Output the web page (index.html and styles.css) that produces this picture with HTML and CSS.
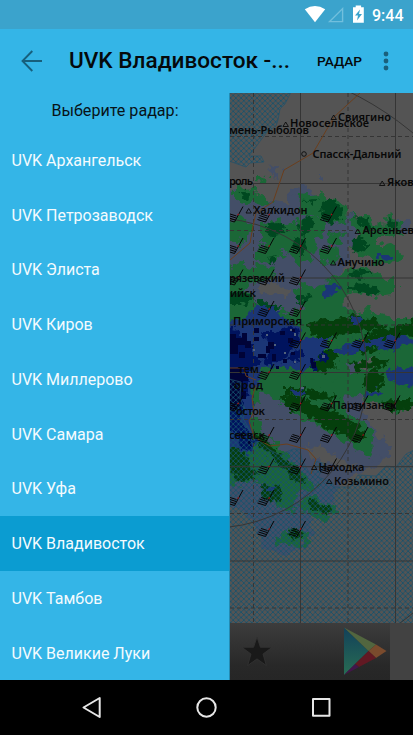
FILE: index.html
```html
<!DOCTYPE html>
<html lang="ru">
<head>
<meta charset="utf-8">
<title>UVK Владивосток</title>
<link rel="stylesheet" href="styles.css">
</head>
<body>
<div class="screen">
  <header class="status">
    <svg class="status-icons" viewBox="300 0 70 29">
      <path fill="#fff" d="M304.800 9.200Q315 2.800 325.200 9.200L315 22.200Z"/>
      <path fill="none" stroke="#71bfdd" stroke-width="1.400" d="M342.600 8.600V21.600H329.600Z"/>
      <path fill="#fff" d="M353 7.200h2.700V5.600h5.400v1.600h2.700v15.600H353z"/>
      <path fill="#3ba3cc" d="M360 9.500l-5 6h3l-1 5 5-6.500h-3z"/>
    </svg>
    <span class="time">9:44</span>
  </header>
  <div class="appbar">
    <svg class="back" viewBox="0 0 22 22"><path fill="none" stroke="#175f7c" stroke-width="1.900" d="M21 11H2M11.300 1L1.500 11l9.800 10"/></svg>
    <h1>UVK Владивосток -...</h1>
    <span class="action">РАДАР</span>
    <svg class="more" viewBox="0 0 6 20"><g fill="#1a607c"><circle cx="3" cy="3" r="2.400"/><circle cx="3" cy="10" r="2.400"/><circle cx="3" cy="17" r="2.400"/></g></svg>
  </div>
  <main class="content">
    <nav class="drawer">
      <h2>Выберите радар:</h2>
      <ul>
        <li>UVK Архангельск</li>
        <li>UVK Петрозаводск</li>
        <li>UVK Элиста</li>
        <li>UVK Киров</li>
        <li>UVK Миллерово</li>
        <li>UVK Самара</li>
        <li>UVK Уфа</li>
        <li class="selected">UVK Владивосток</li>
        <li>UVK Тамбов</li>
        <li>UVK Великие Луки</li>
      </ul>
    </nav>
    <section class="radar">
      <svg class="map" viewBox="230 93 183 530">
        <defs>
          <pattern id="hatch" width="5.300" height="5.300" patternUnits="userSpaceOnUse"><path d="M0 0L5.300 5.300M5.300 0L0 5.300" stroke="#14526e" stroke-width=".8"/></pattern>
          <filter id="rough" color-interpolation-filters="sRGB" x="-20%" y="-20%" width="140%" height="140%"><feTurbulence type="fractalNoise" baseFrequency=".11" numOctaves="3" seed="8"/><feDisplacementMap in="SourceGraphic" scale="17" xChannelSelector="R" yChannelSelector="G"/></filter>
          <filter id="fine" color-interpolation-filters="sRGB" x="-20%" y="-20%" width="140%" height="140%"><feTurbulence type="fractalNoise" baseFrequency=".18" numOctaves="2" seed="3"/><feDisplacementMap in="SourceGraphic" scale="12" xChannelSelector="R" yChannelSelector="G"/></filter>
          <g id="barb" fill="none" stroke="#050505" stroke-width="1"><path d="M5-8L-3.500 7.500M-1.500 1.500L-8-.5M-2 3.500L-9.500 1M-2.700 5.500L-10.500 3M-3.500 7.500L-11.500 5"/><path stroke="#a01818" stroke-width="1.300" d="M-.4.700L.6-.7"/></g>
        </defs>
        <rect x="230" y="93" width="183" height="530" fill="#545454"/>
        <g filter="url(#rough)" fill="#434e67">
          <path d="M215 192L240 188 262 200 284 204 290 190 306 184 318 200 336 200 348 214 360 222 356 240 348 262 336 278 340 300 360 320 360 400 376 430 392 450 376 466 352 476 336 490 330 504 312 516 310 544 284 556 262 548 254 520 236 508 215 494Z"/>
          <path d="M268 168l10-1 2 8-9 2zM318 176l8-1v5h-8zM292 188l20-2-4 10-14 4zM384 220l24 0 4 10-20 2zM350 446l28-4 12 12-20 8z"/>
        </g>
        <g filter="url(#rough)" fill="#545454"><path d="M256 288l20-4 18 6-8 6-24-2zM284 376l16 2 10 8-20 2zM376 412l50-8v40l-40 0-14-16zM300 442l26 8 30 16-16 4-30-16z"/></g>
        <g filter="url(#rough)" fill="#1b6737">
          <path d="M236 188L252 189 262 194 274 204 266 208 252 202 246 206 236 202ZM257 176l12 1-1 6-11-1zM300 196l16-3 10 8 10-3 12 9-1 12-8 7-14-3-8-7-10 0-8-6zM262 223l20-4 14 6 6-8 18 0 4 10-8 16-6 18-12 4-8-12-14-4-14-8zM332 233l12 2-6 10-10-6zM350 216l14 0 10 8 12 1 10 4-6 8-12 0 0 8 10 6 4 10-16 4-12-8-10-8 6-12-6-10zM384 218l8-3 8 8 6 10-14-1zM376 246l14-4 12 10-10 12-12-4zM222 222l18-4 14 6-6 16-12 2-14-4zM256 246l18-2 10 10-14 8-14-2zM320 250l12-2 8 8-8 10-12-6z"/>
          <path d="M222 268l22-5 16 2 18 2-10 14-18 2-8 10-20-1zM215 300L248 292 262 306 276 306 292 316 306 306 296 298 298 286 316 284 334 280 344 270 360 266 380 276 396 278 396 294 370 296 350 292 340 302 352 312 366 310 392 318 430 318V352L396 356 372 360 358 362 340 366 350 374 368 366 384 354 430 350V398L396 412 376 406 356 396 340 394 346 410 366 426 374 440 370 456 354 446 330 432 308 422 286 404 262 394 250 412 268 438 288 456 304 474 316 484 312 492 298 490 294 514 282 508 270 490 252 480 240 484 215 478Z"/>
          <path d="M304 498l14 0 8 6 10 2-2 10-14 6-12-10-8-8zM274 537l18-6 14 2 6 10-14 4-20-4z"/>
        </g>
        <g filter="url(#rough)" fill="#1b6737"><path d="M230 345H340L348 380 300 378 292 372 262 376 250 390H230z"/></g>
        <g filter="url(#fine)" fill="#004820">
          <path d="M322 203l10-4 9 7-1 12-11 6-8-8zM304 200l14-1-6 5zM242 190l9 2-4 8-6-1zM266 224l16-1 6 9-16 5-6-5zM306 216l8 4-1 10-9 6-6-8zM292 240l8-2 8 8-5 10-9-6zM353 216l12 2 8 8-7 4zM352 240l8-4 9 10-9 8-9-4zM388 218l10 6-2 8-7-4zM268 258l10-2-8 8zM350 272l16-5 6 7-16 5zM348 284l22 1 12 6-12 4-22-5zM300 296l12-2-6 8-12 3zM228 291l18 0 8 9-12 5-14 0zM256 296l12 8 14 3-10 5-16-7z"/>
        </g>
        <g filter="url(#fine)" fill="#053f0c">
          <path d="M307 323l20-3 14-2 14-3 20 5 12 8-20 4-26 3-20 5-12-9zM372 332l30-7 16-5v16l-24 2-16 12-18 4-10-8zM300 352l14-2 18 0 8 8-24 10-20-4zM280 396l18 0 18 9 26 10 18 12 8 10-12 6-18-10-20-8-14-12-18-6zM284 388l20 0 20 4 14 6-20 2-20-5-14 1zM366 374l12-6 8 12-12 12-12-6zM380 401l16-1 16 0 2 8-22 4zM246 427l20 12 14 15 22 18 5 12-12-4-18-18-22-20zM228 444l14 4 10 22-14 2-10-4zM228 468l20-4 12 10-20 9zM309 498l6 0 6 8 12 0-6 10-18-8zM262 485l17 2 4 10-10 6-12-8zM288 530l10-1 5 7-11 5zM350 362l24-2 16-2-4 8-30 6zM310 360l18-2 8 9-18 6z"/>
        </g>
        <g filter="url(#fine)" fill="#1b3676">
          <path d="M222 322L246 318 250 310 266 305 276 311 290 322 300 326 302 338 330 338 324 352 316 362 298 372 282 366 262 368 258 382 250 390 254 404 250 422 256 446 248 456 236 446 222 446Z"/>
          <path d="M323 290l8-6 9 3-5 8-12 2zM351 318l12-1-3 7-9-1zM334 350l18-9 20-1 20-4 16 1 4 5-18 8-24-2-20 6-16 0zM376 255l14 0-2 5-12-2zM386 372l10-4 16-1 4 9-4 12-16-4-10-8zM362 394l16-4 6 4-14 4zM292 392l12-3 2 5-11 2zM268 488l6-2v7h-6z"/>
        </g>
        <g filter="url(#fine)" fill="#00135e">
          <path d="M222 325L238 328 244 338 252 344 252 356 262 362 248 372 248 392 240 400 246 410 240 420 254 440 252 452 240 448 236 432 222 428Z"/>
          <path d="M262 332l12 0 14-6 10 4 2 12-8 8-10 10-12 8-6-8 8-12zM310 360l5 0 2 9-5 2zM298 348l8 8-8 6-10-3zM322 352l6 0-2 12-5-2z"/>
        </g>
        <g fill="#000337"><path d="M230 334h6v4h6v-5h5v8h4v7h-6v-3h-7v9h-8zM254 328h5v5h-5zM254 337h5v4h-5zM268 342h6v7h-4v4h-4v-7h2zM280 331h5v4h-5zM288 338h5v5h-5zM258 354h8v4h-8zM272 354h4v7h-4zM239 352h6v6h-6zM230 368h12v6h6v7h-5v10h3v8h-5v11h-11zM239 432h5v6h-5zM248 441h3v5h-3zM292 329h3v3h-3zM291 352h4v3h-4zM283 359h4v4h-4zM276 366h3v3h-3zM310 358h3v4h3v6h-4z"/></g>
        <g fill="#51617b"><path d="M274 344h2v2h-2zM294 333h2v3h-2zM322 355h3v3h-3zM284 352h2v2h-2zM266 334h2v2h-2zM253 349h2v2h-2zM294 361h2v2h-2zM290 329h2v2h-2zM301 387h3v2h-3z"/></g>
        <g fill="url(#hatch)" stroke="#225069" stroke-width=".7">
          <path d="M229 92H291L285 104 280 109 278 120 276 126 267 132 249 156H261L264 162 250 163 246 167 229 161Z"/>
          <path d="M229 379L241 382 240 398 246 411 243 418 253 436 270 450 280 455 293 449 300 449 302 460 310 474 315 461 326 464 318 477 332 482 334 487H350L358 475 376 476 386 466 396 467 406 454 414 450V624H229Z"/>
        </g>
        <g fill="none" stroke="#353535" stroke-width="1">
          <path d="M300.500 93V623M395.500 93V623M230 183.500H413M230 278H413M230 372.500H413M230 466.700H413M230 561H413"/>
          <path stroke-dasharray="4 3" d="M253.500 93V623M348 93V623M230 136.500H413M230 230.500H413M230 325H413M230 419.500H413M230 513.500H413M230 608H413"/>
          <circle cx="212" cy="373" r="155"/><circle cx="212" cy="373" r="313"/>
        </g>
        <path fill="none" stroke="#6b3e1c" stroke-width="1" d="M360 93L334 117 313 153 284 170 273 202 256 213 253 226 250 243 230 260M230 368L244 368 246 376 256 380M256 385L252 398 254 412 249 421 254 437 270 446 287 444 308 450 316 459 311 474"/>
        <g>
          <use href="#barb" x="238" y="214.500"/><use href="#barb" x="269" y="214.500"/><use href="#barb" x="331.500" y="214.500"/>
          <use href="#barb" x="238" y="246"/><use href="#barb" x="269" y="246"/><use href="#barb" x="300.500" y="246"/><use href="#barb" x="331.500" y="246"/>
          <use href="#barb" x="238" y="277.500"/><use href="#barb" x="269" y="277.500"/><use href="#barb" x="300.500" y="277.500"/>
          <use href="#barb" x="269" y="309"/><use href="#barb" x="300.500" y="309"/>
          <use href="#barb" x="300.500" y="340.500"/><use href="#barb" x="331.500" y="340.500"/><use href="#barb" x="363" y="340.500"/><use href="#barb" x="395" y="340.500"/>
          <use href="#barb" x="269" y="372"/><use href="#barb" x="300.500" y="372"/>
          <use href="#barb" x="238" y="403.500"/><use href="#barb" x="300.500" y="403.500"/><use href="#barb" x="331.500" y="403.500"/><use href="#barb" x="363" y="403.500"/><use href="#barb" x="395" y="403.500"/>
          <use href="#barb" x="269" y="435"/><use href="#barb" x="300.500" y="435"/><use href="#barb" x="331.500" y="435"/><use href="#barb" x="363" y="435"/>
          <use href="#barb" x="269" y="466.500"/><use href="#barb" x="300.500" y="466.500"/><use href="#barb" x="331.500" y="466.500"/>
          <use href="#barb" x="238" y="498"/><use href="#barb" x="269" y="498"/><use href="#barb" x="269" y="529"/><use href="#barb" x="300.500" y="529"/>
        </g>
        <g fill="none" stroke="#0b0b0b" stroke-width=".9">
          <path d="M331 119.500l2.700-4.500 2.700 4.500zM283 126.500l2.700-4.500 2.700 4.500zM379.500 185.500l2.700-4.500 2.700 4.500zM246 213l2.700-4.500 2.700 4.500zM355 233.500l2.700-4.500 2.700 4.500zM330.500 265l2.700-4.500 2.700 4.500zM311.500 469.500l2.700-4.500 2.700 4.500zM326.500 483.500l2.700-4.500 2.700 4.500zM327 408l2.700-4.500 2.700 4.500z"/>
          <circle cx="304" cy="154" r="2.300"/>
        </g>
        <g class="places">
          <text x="338" y="120.500" textLength="53">Свиягино</text>
          <text x="290" y="126.500" textLength="79">Новосельское</text>
          <text x="229" y="133.500" textLength="80">мень-Рыболов</text>
          <text x="312.500" y="158" textLength="89">Спасск-Дальний</text>
          <text x="229" y="185" textLength="24">роль</text>
          <text x="387" y="186">Яков</text>
          <text x="362.500" y="233.500" textLength="51.500">Арсеньев</text>
          <text x="253.500" y="214" textLength="54">Халкидон</text>
          <text x="337.500" y="265.500" textLength="47">Анучино</text>
          <text x="229" y="281.500" textLength="56">рязевский</text>
          <text x="230" y="296.500" textLength="26">ийск</text>
          <text x="233" y="325" textLength="69">Приморская</text>
          <text x="238" y="372.500" textLength="21">тем</text>
          <text x="234" y="389" textLength="29">ород</text>
          <text x="236" y="414.500" textLength="29">осток</text>
          <text x="229" y="439" textLength="36">сеевск</text>
          <text x="332.500" y="409" textLength="64">Партизанск</text>
          <text x="318.500" y="470.500" textLength="46">Находка</text>
          <text x="334" y="484.500" textLength="55">Козьмино</text>
        </g>
      </svg>
      <footer class="ad">
        <svg viewBox="230 623 183 57">
          <defs>
            <linearGradient id="bar" x2="0" y2="1"><stop stop-color="#3c3c3c"/><stop offset=".75" stop-color="#282828"/><stop offset="1" stop-color="#262626"/></linearGradient>
            <linearGradient id="teal" x2="0" y2="1"><stop stop-color="#12415a"/><stop offset="1" stop-color="#286c53"/></linearGradient>
          </defs>
          <path fill="#424242" d="M230 623h183v57H230z"/><path fill="url(#bar)" d="M230 623h160v57H230z"/>
          <path fill="#191919" stroke="#343434" stroke-width=".8" d="M257 637l3.400 10.300H272l-9 6.800 3.400 11.500-9.400-6.700-9.400 6.700 3.400-11.500-9-6.800h11.600z"/>
          <path fill="url(#teal)" d="M344 627.500L368.500 651 344 675z"/>
          <path fill="#52663f" d="M344 627.500L376 644.500 368.500 651z"/>
          <path fill="#7a4b2d" d="M376 644.500L386.500 651 376 658 368.500 651z"/>
          <path fill="#621923" d="M368.500 651L376 658 359 667 355 664z"/><path fill="#43164a" d="M355 664L359 667 344 675z"/>
        </svg>
      </footer>
    </section>
  </main>
  <div class="navbar">
    <svg viewBox="0 0 413 55"><g fill="none" stroke="#e6e6e6" stroke-width="2" stroke-linejoin="round"><path d="M99.700 18v19L83.500 27.500z"/><circle cx="206.500" cy="27.500" r="9.200"/><path d="M313 19h16.500v16.800H313z"/></g></svg>
  </div>
</div>
</body>
</html>
```
FILE: styles.css
```css
* { box-sizing: border-box; }
body { margin: 0; font-family: Roboto, "Noto Sans", sans-serif; background: #000; }
svg { display: block; }
h1, h2, ul { margin: 0; padding: 0; }
.screen { width: 413px; height: 735px; overflow: hidden; display: flex; flex-direction: column; }
.status { height: 29px; flex: none; background: #3ba3cc; display: flex; align-items: center; justify-content: flex-end; padding-right: 9px; color: #fff; }
.status-icons { width: 70px; height: 29px; }
.time { width: 34px; padding-left: 2px; font-size: 16px; font-weight: 500; line-height: 29px; padding-top: 1px; white-space: nowrap; }
.appbar { height: 64px; flex: none; background: #34b5e7; display: flex; align-items: center; padding-left: 21px; color: #05090b; }
.back { width: 22px; height: 22px; }
h1 { width: 249px; padding-left: 26px; font-size: 22.6px; font-weight: 500; line-height: 66px; white-space: nowrap; }
.action { width: 67px; padding-left: 25px; font-size: 13.7px; font-weight: 500; line-height: 64px; }
.more { width: 6px; height: 20px; margin-left: 23.5px; }
.content { height: 587px; flex: none; display: flex; }
.drawer { width: 230px; flex: none; background: #34b5e7; border-right: 1px solid #238bb3; }
h2 { height: 39.8px; padding-left: 1px; font-size: 16.1px; font-weight: 400; line-height: 36px; text-align: center; color: #081318; }
ul { list-style: none; }
li { height: 54.75px; padding-left: 11.5px; font-size: 16px; line-height: 55px; color: #f4fbfe; white-space: nowrap; }
li.selected { height: 55px; margin-top: -0.5px; margin-bottom: 0.25px; background: #0b9cd1; }
.radar { width: 183px; background: #545454; }
.map { width: 183px; height: 530px; }
.places { font: 600 11px "Noto Sans", sans-serif; fill: #080808; }
.ad svg { width: 183px; height: 57px; }
.navbar { height: 55px; flex: none; background: #000; }
.navbar svg { width: 413px; height: 55px; }
```
